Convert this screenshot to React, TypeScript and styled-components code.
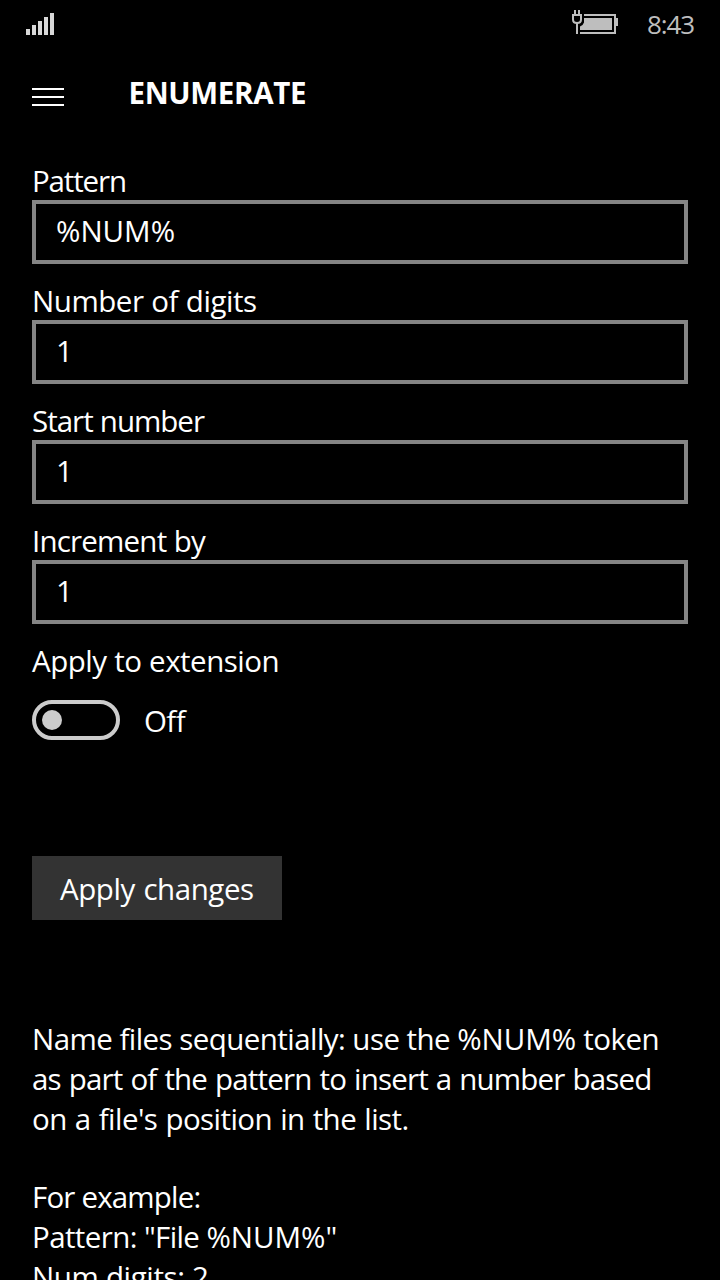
import React from "react";
import styled, { createGlobalStyle } from "styled-components";

const GlobalStyle = createGlobalStyle`
  html, body { margin: 0; background: #000; }
  body { overflow: hidden; }
  *, *::before, *::after { box-sizing: border-box; }
`;

const Screen = styled.div`
  display: flex;
  flex-direction: column;
  width: 720px;
  height: 1280px;
  overflow: hidden;
  background: #000;
  color: #fff;
  font-family: "Open Sans", "Noto Sans", sans-serif;
  font-size: 29.5px;
  white-space: nowrap;
`;

const StatusBar = styled.header`
  display: flex;
  flex: none;
  height: 48px;
  padding: 0 25px 0 26px;
  color: #bebebe;
`;

const SignalIcon = styled.svg`
  display: block;
  margin-top: 13px;
  fill: #d8d8d8;
`;

const BatteryIcon = styled.svg`
  display: block;
  margin: 10px 29px 0 auto;
`;

const Clock = styled.time`
  width: 48px;
  font-size: 26px;
  line-height: 48px;
  letter-spacing: -1.1px;
`;

const TitleBar = styled.div`
  display: flex;
  flex: none;
  height: 114px;
  padding-left: 32px;
`;

const MenuButton = styled.button`
  display: flex;
  flex-direction: column;
  gap: 6px;
  width: 32px;
  margin: 40px 64.5px 0 0;
  padding: 0;
  border: 0;
  background: none;
`;

const MenuLine = styled.span`
  width: 100%;
  height: 2px;
  background: #fff;
`;

const Title = styled.h1`
  margin: 25px 0 0;
  font-size: 29.5px;
  font-weight: 700;
  line-height: 40px;
  letter-spacing: -0.32px;
`;

const Form = styled.main`
  display: flex;
  flex-direction: column;
  align-items: flex-start;
  padding: 0 32px;
`;

const Field = styled.div`
  width: 100%;
  margin-bottom: 18px;
`;

const Label = styled.div<{ $tracking: number }>`
  line-height: 38px;
  letter-spacing: ${(p) => p.$tracking}px;
  word-spacing: 0.5px;
`;

const TextBox = styled.div`
  height: 64px;
  padding: 0 20px;
  border: 4px solid #858585;
  line-height: 54px;
`;

const ToggleRow = styled.div`
  display: flex;
  gap: 24px;
  height: 40px;
  margin-top: 20px;
`;

const Toggle = styled.div`
  display: flex;
  align-items: center;
  width: 88px;
  height: 40px;
  padding-left: 6px;
  border: 4px solid #ccc;
  border-radius: 20px;
`;

const Knob = styled.span`
  width: 20px;
  height: 20px;
  border-radius: 50%;
  background: #ccc;
`;

const ToggleState = styled.span`
  line-height: 42px;
  letter-spacing: -0.6px;
`;

const ApplyButton = styled.button`
  width: 250px;
  height: 64px;
  margin: 116px 0 99px;
  padding: 1px 0 0 28px;
  border: 0;
  background: #333;
  color: inherit;
  font: inherit;
  line-height: 63px;
  letter-spacing: -0.45px;
  word-spacing: 1.5px;
  text-align: left;
`;

const Paragraph = styled.p`
  margin: 0 0 38px;
  line-height: 40px;
`;

const Line = styled.span<{ $tracking: number; $words?: number }>`
  display: block;
  letter-spacing: ${(p) => p.$tracking}px;
  word-spacing: ${(p) => p.$words ?? 0}px;
`;

const Token = styled.span`
  letter-spacing: 0;
`;

const fields = [
  { label: "Pattern", value: "%NUM%", tracking: -1.15 },
  { label: "Number of digits", value: "1", tracking: -0.45 },
  { label: "Start number", value: "1", tracking: -1 },
  { label: "Increment by", value: "1", tracking: -0.8 },
];

export default function App() {
  return (
    <Screen>
      <GlobalStyle />
      <StatusBar>
        <SignalIcon width="28" height="22" viewBox="0 0 28 22">
          <path d="M0 16h4v6H0zM6 12h4v10H6zM12 8h4v14h-4zM18 4h4v18h-4zM24 0h4v22h-4z" />
        </SignalIcon>
        <BatteryIcon width="46" height="25" viewBox="0 0 46 25" fill="#bebebe">
          <path d="M12 4H44V8H46V16H44V24H8V22H42V6H12z" />
          <path d="M12 8H40V20H8V16.500L10.500 15L12 12.500z" />
          <path d="M2 0h2v4h-2zM6 0h2v4h-2zM4 13h2v11h-2z" />
          <path d="M1 5H9V9.500C9 11.800 7.400 13 5 13S1 11.800 1 9.500z" fill="none" stroke="#bebebe" strokeWidth="2" />
        </BatteryIcon>
        <Clock>8:43</Clock>
      </StatusBar>
      <TitleBar>
        <MenuButton aria-label="Menu">
          <MenuLine />
          <MenuLine />
          <MenuLine />
        </MenuButton>
        <Title>ENUMERATE</Title>
      </TitleBar>
      <Form>
        {fields.map((f) => (
          <Field key={f.label}>
            <Label $tracking={f.tracking}>{f.label}</Label>
            <TextBox>{f.value}</TextBox>
          </Field>
        ))}
        <Label $tracking={-0.5}>Apply to extension</Label>
        <ToggleRow>
          <Toggle role="switch" aria-checked={false}>
            <Knob />
          </Toggle>
          <ToggleState>Off</ToggleState>
        </ToggleRow>
        <ApplyButton>Apply changes</ApplyButton>
        <Paragraph>
          <Line $tracking={-0.55}>
            Name files sequentially: use the <Token>%NUM%</Token> token
          </Line>
          <Line $tracking={-0.82} $words={1.1}>as part of the pattern to insert a number based</Line>
          <Line $tracking={-0.56} $words={1}>on a file's position in the list.</Line>
        </Paragraph>
        <Paragraph>
          <Line $tracking={-0.82}>For example:</Line>
          <Line $tracking={-0.6}>
            Pattern: "File <Token>%NUM%</Token>"
          </Line>
          <Line $tracking={-0.35}>Num digits: 2</Line>
        </Paragraph>
      </Form>
    </Screen>
  );
}
